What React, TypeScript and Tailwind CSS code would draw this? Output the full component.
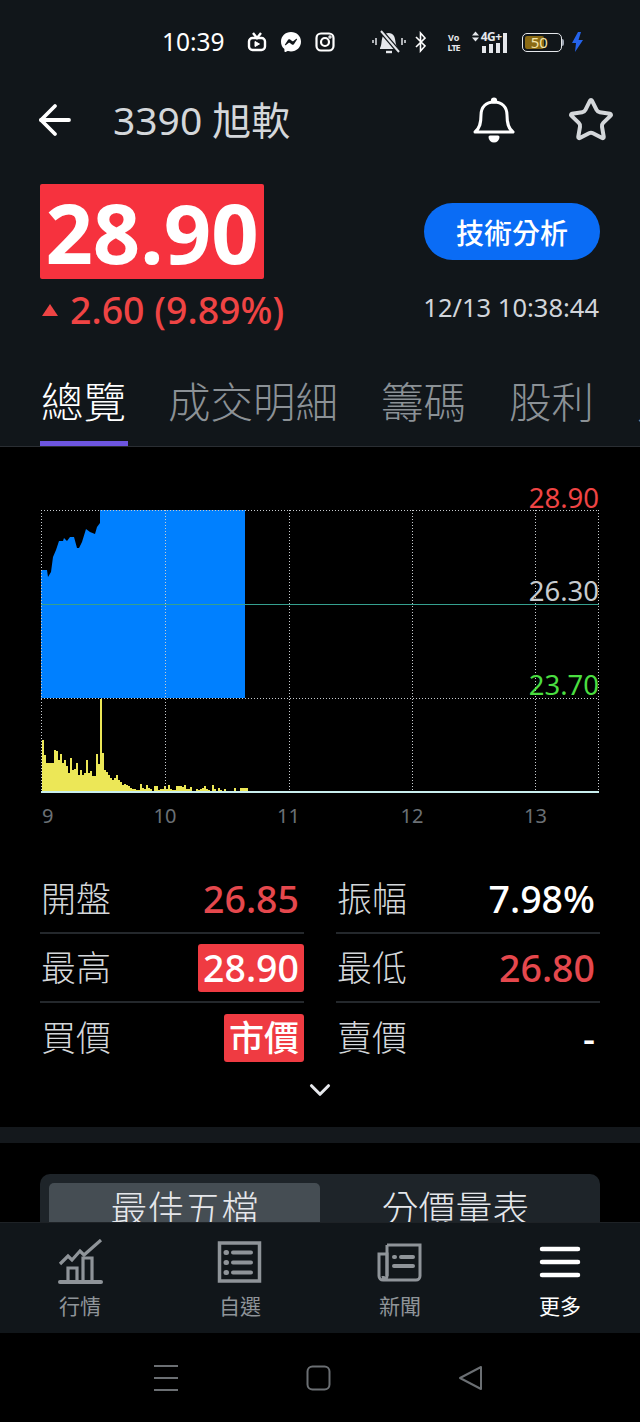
import { ArrowLeft, ChevronDown, Star } from "lucide-react";
import { RiMessengerFill } from "react-icons/ri";

const TABS = ["成交明細", "籌碼", "股利", "財報"];

const VOLUME = [
  52, 37, 29, 29, 29, 29, 42, 41, 32, 38, 29, 32, 26, 19, 34, 22, 23, 29, 17, 22, 17, 19, 32, 19, 21, 16, 16, 38, 28,
  93, 39, 22, 20, 17, 14, 12, 14, 17, 12, 10, 7, 8, 7, 6, 4, 3, 3, 2, 2, 8, 4, 3, 7, 4, 3, 1, 6, 6, 2, 3, 3, 6, 3, 7,
  3, 2, 2, 6, 6, 6, 5, 7, 3, 3, 5, 1, 1, 3, 2, 3, 4, 6, 3, 2, 1, 7, 3, 1, 4, 2, 1, 3, 1, 0, 0, 1, 4, 1, 1, 4, 4, 4, 4,
];

const PRICE_LINE =
  "41,698 41,570 47,570 48,577 51,572 53,557 56,550 59,541 63,541 64,538 67,541 70,537 74,537 77,548 79,548 82,542 86,529 90,532 95,534 97,527 100,523 100,510 245,510 245,698";

function StatusBar() {
  return (
    <div className="flex h-[84px] items-center pl-[162px] text-white">
      <span className="text-[24.5px] leading-none">10:39</span>
      <svg className="ml-[22px] h-[20px] w-[20px]" viewBox="0 0 20 20" fill="none" stroke="white" strokeWidth="2.4">
        <rect x="2" y="6" width="16" height="12" rx="3.5" />
        <path d="M6 1l4 5 4-5" />
        <path d="M8 9.5v5l4.5-2.5z" fill="white" strokeWidth="1" />
      </svg>
      <RiMessengerFill className="ml-[12px] h-[24px] w-[24px]" />
      <svg className="ml-[12px] h-[20px] w-[20px]" viewBox="0 0 20 20" fill="none" stroke="white" strokeWidth="2.2">
        <rect x="1.5" y="1.5" width="17" height="17" rx="4.5" />
        <circle cx="10" cy="10" r="4" />
        <circle cx="15" cy="5" r="0.6" fill="white" />
      </svg>
      <svg className="ml-[37px] h-[26px] w-[34px]" viewBox="0 0 34 26" fill="none">
        <path d="M8 19c2-3 1-8 3-12 2-4 9-4 11 0 2 4 1 9 4 12v1H8z" fill="#e5e7eb" />
        <path d="M14 23h6" stroke="#e5e7eb" strokeWidth="2.4" />
        <path d="M9 2l18 21" stroke="#11161a" strokeWidth="4.5" />
        <path d="M9 2l18 21" stroke="#e5e7eb" strokeWidth="2" />
        <path d="M4 9v7M1 11v3M30 9v7M33 11v3" stroke="#e5e7eb" strokeWidth="1.5" />
      </svg>
      <svg className="ml-[9px] h-[22px] w-[11px]" viewBox="0 0 11 22" fill="none" stroke="white" strokeWidth="1.6">
        <path d="M1 6l9 9-4.5 5V2L10 7l-9 9" />
      </svg>
      <div className="ml-[21px] flex w-[14px] flex-col items-center gap-[1px] text-[9px] font-bold text-[#e5e7eb]">
        <div className="h-[9px] leading-[9px]">Vo</div>
        <div className="h-[9px] leading-[9px] tracking-[-1px]">LTE</div>
      </div>
      <div className="ml-[11px] flex h-[22px] w-[40px] flex-col">
        <div className="flex h-[11px] items-center">
          <svg className="h-[11px] w-[7px]" viewBox="0 0 7 11" fill="#e5e7eb">
            <path d="M0 4.5l3.5-4 3.5 4zM0 6.5h7l-3.5 4z" />
          </svg>
          <span className="ml-[2px] text-[12px] font-bold leading-none tracking-[-0.5px] text-[#e5e7eb]">4G+</span>
        </div>
        <div className="mt-[1px] flex h-[10px] items-end gap-[3px] pl-[10px]">
          <div className="h-[7px] w-[4px] bg-[#e5e7eb]" />
          <div className="h-[9px] w-[4px] bg-[#e5e7eb]" />
          <div className="h-[10px] w-[4px] bg-[#e5e7eb]" />
          <div className="-mt-[10px] h-[20px] w-[4px] bg-[#e5e7eb]" />
        </div>
      </div>
      <div className="relative ml-[10px] flex h-[19px] w-[40px] items-center rounded-[5px] border border-[#e5e7eb] p-[2px]">
        <div className="h-full w-[19px] rounded-[2px] bg-[#8a6a14]" />
        <span className="absolute left-[8px] text-[15px] leading-none text-[#f3e3a8]">50</span>
      </div>
      <div className="h-[7px] w-[2px] rounded-r bg-[#9ca3af]" />
      <svg className="ml-[8px] h-[20px] w-[11px]" viewBox="0 0 11 20" fill="#2563eb">
        <path d="M6 0L0 11h4l-1 9 8-12H6.5L9 0z" />
      </svg>
    </div>
  );
}

function Header() {
  return (
    <div className="flex h-[72px] items-center pl-[31px] pr-[25px]">
      <ArrowLeft className="h-[48px] w-[48px] text-white" strokeWidth={1.9} />
      <span className="mb-[2px] ml-[34px] text-[39px] leading-none text-[#d4d7da]">3390 旭軟</span>
      <svg
        className="ml-auto h-[46px] w-[44px]"
        viewBox="0 0 44 46"
        fill="none"
        stroke="white"
        strokeWidth="3"
        strokeLinejoin="round"
      >
        <path d="M3 35c5-4 6-9 6-17C9 10 14 5 22 5s13 5 13 13c0 8 1 13 6 17z" />
        <circle cx="22" cy="3.5" r="1.6" fill="white" />
        <path d="M18 40h8a4 4 0 0 1-8 0z" fill="white" />
      </svg>
      <Star className="ml-[51px] h-[48px] w-[48px] text-[#d4d7da]" strokeWidth={2} />
    </div>
  );
}

function Quote() {
  return (
    <div className="px-10 pt-[28px]">
      <div className="flex items-center justify-between">
        <div className="flex h-[95px] w-[224px] items-center justify-center rounded-[2px] bg-[#f6323e] text-[83px] font-bold leading-none text-white">
          28.90
        </div>
        <div className="flex h-[57px] w-[176px] items-center justify-center rounded-full bg-[#0a6cf5] pt-[3px] text-[28px] font-medium text-white">
          技術分析
        </div>
      </div>
      <div className="mt-[11px] flex h-[40px] items-center justify-between">
        <div className="flex items-center text-[37.5px] font-medium leading-none text-[#ef4444]">
          <span className="ml-[2px] mr-[12px] h-0 w-0 border-x-[8px] border-b-[12px] border-x-transparent border-b-[#ef4444]" />
          2.60 (9.89%)
        </div>
        <span className="pb-[5px] pr-[1px] text-[25.5px] leading-none text-[#d1d5db]">12/13 10:38:44</span>
      </div>
    </div>
  );
}

function TabBar() {
  return (
    <div className="mt-[37px] flex h-[80px] items-start overflow-hidden whitespace-nowrap border-b border-[#2a2e33] pl-10 text-[42.5px] font-light leading-[70px]">
      <div className="-mr-[3px] h-[80px] w-[88px] shrink-0 border-b-[6px] border-[#6d55e0] pl-[1px] text-white">總覽</div>
      {TABS.map((tab) => (
        <span key={tab} className="ml-[43px] shrink-0 text-[#8b9196]">
          {tab}
        </span>
      ))}
    </div>
  );
}

function Chart() {
  return (
    <div className="relative mt-[53px] h-[300px]">
      <svg className="h-[300px] w-[640px]" viewBox="0 500 640 300">
        <polygon points={PRICE_LINE} fill="#0080ff" />
        {VOLUME.map((h, i) => (
          <rect key={i} x={42 + i * 2} y={792 - h} width="2" height={h} fill="#ece757" />
        ))}
        <g stroke="#c8ccd0" strokeDasharray="1 2" fill="none">
          <path d="M41 510.5H598M41 698.5H598" />
          <path d="M41.5 510V792M165.5 510V792M289.5 510V792M412.5 510V792M535.5 510V792M598.5 510V792" />
        </g>
        <path d="M41 604.5H599" stroke="#35a08f" />
        <path d="M41 792H599" stroke="#c9eeee" strokeWidth="2" />
      </svg>
      <div className="absolute right-[41px] top-[-20px] text-[27.5px] leading-[36px] text-[#ef4444]">28.90</div>
      <div className="absolute right-[41px] top-[73px] text-[27.5px] leading-[36px] text-[#c8cbce]">26.30</div>
      <div className="absolute right-[41px] top-[167px] text-[27.5px] leading-[36px] text-[#4ade40]">23.70</div>
    </div>
  );
}

function TimeAxis() {
  return (
    <div className="mt-[2px] flex pl-[42px] text-[20px] leading-[28px] text-[#6b7075]">
      <span className="w-[61px]">9</span>
      <span className="w-[124px] text-center">10</span>
      <span className="w-[123px] text-center">11</span>
      <span className="w-[124px] text-center">12</span>
      <span className="w-[123px] text-center">13</span>
    </div>
  );
}

function StatRow({
  label,
  value,
  tone,
  divider,
}: {
  label: string;
  value: string;
  tone: "red" | "white" | "badge" | "market";
  divider?: boolean;
}) {
  return (
    <div className={`flex h-[69px] items-center justify-between ${divider ? "border-b-2 border-[#24282c]" : ""}`}>
      <span className="pl-[1px] text-[35px] font-light leading-none text-[#d4d7da]">{label}</span>
      {tone === "badge" || tone === "market" ? (
        <span
          className={`flex h-[48px] items-center rounded-[3px] bg-[#ef3b42] px-[5px] font-medium leading-none text-white ${tone === "market" ? "text-[35px]" : "text-[37.5px]"}`}
        >
          {value}
        </span>
      ) : (
        <span
          className={`pr-[5px] text-[37.5px] font-medium leading-none ${tone === "red" ? "text-[#e5484d]" : "text-white"}`}
        >
          {value}
        </span>
      )}
    </div>
  );
}

function Stats() {
  return (
    <div className="mt-[35px]">
      <div className="grid grid-cols-2 gap-x-[32px] px-10">
        <div>
          <StatRow label="開盤" value="26.85" tone="red" divider />
          <StatRow label="最高" value="28.90" tone="badge" divider />
          <StatRow label="買價" value="市價" tone="market" />
        </div>
        <div>
          <StatRow label="振幅" value="7.98%" tone="white" divider />
          <StatRow label="最低" value="26.80" tone="red" divider />
          <StatRow label="賣價" value="-" tone="white" />
        </div>
      </div>
      <div className="flex h-[34px] items-center justify-center pt-[2px]">
        <ChevronDown className="h-[34px] w-[34px] text-[#e5e7eb]" strokeWidth={2.2} />
      </div>
    </div>
  );
}

function DepthTabs() {
  return (
    <div className="mx-10 mt-[31px] h-[70px] rounded-t-[10px] bg-[#1e2429] px-[9px] pt-[9px]">
      <div className="grid h-[60px] grid-cols-2 text-center text-[37px] font-light leading-[52px] text-[#e5e7eb]">
        <div className="rounded-t-[5px] bg-[#454d53]">最佳五檔</div>
        <div>分價量表</div>
      </div>
    </div>
  );
}

function NavItem({ label, active, children }: { label: string; active?: boolean; children: React.ReactNode }) {
  return (
    <div className={`flex flex-col items-center pt-[16px] ${active ? "text-white" : "text-[#8f9499]"}`}>
      <div className="h-[50px] w-[48px]">{children}</div>
      <span className="mt-[2px] text-[21px] leading-[30px]">{label}</span>
    </div>
  );
}

function BottomNav() {
  return (
    <div className="grid h-[111px] shrink-0 grid-cols-4 border-t border-[#1e2226] bg-[#11161a]">
      <NavItem label="行情">
        <svg viewBox="0 0 48 50" fill="none" stroke="currentColor" strokeWidth="3.2">
          <path d="M4 25l8-8 4 4 8-9 4 4L45 1" />
          <path d="M4 43h41" strokeWidth="4" strokeLinecap="round" />
          <path d="M12 42V29h9v13M27 42V19h9v23" />
        </svg>
      </NavItem>
      <NavItem label="自選">
        <svg viewBox="0 0 48 50" fill="none" stroke="currentColor">
          <rect x="3.5" y="4" width="40" height="38" strokeWidth="3.5" />
          <path d="M17 13.5h18M17 23.5h18M17 33.5h18" strokeWidth="4" strokeLinecap="round" />
          <path d="M10 13.5h.5M10 23.5h.5M10 33.5h.5" strokeWidth="5" strokeLinecap="round" />
        </svg>
      </NavItem>
      <NavItem label="新聞">
        <svg viewBox="0 0 48 50" fill="none" stroke="currentColor" strokeWidth="3">
          <path d="M11 6h33v31a4 4 0 0 1-4 4H7a4 4 0 0 1-4-4V15h8v22a2 2 0 0 1-4 0" />
          <path d="M11 6v31" />
          <path d="M25 18h12M18 27h19" strokeWidth="4" strokeLinecap="round" />
          <path d="M18 18h1" strokeWidth="4" strokeLinecap="round" />
        </svg>
      </NavItem>
      <NavItem label="更多" active>
        <svg viewBox="0 0 48 50" fill="none" stroke="currentColor" strokeWidth="4.5" strokeLinecap="round">
          <path d="M6 10h36M6 23h36M6 36h36" />
        </svg>
      </NavItem>
    </div>
  );
}

function SystemNav() {
  return (
    <div className="flex h-[89px] shrink-0 items-center bg-black pl-[153px] text-[#6b6f73]">
      <svg className="h-[28px] w-[26px]" viewBox="0 0 26 28" stroke="currentColor" strokeWidth="2">
        <path d="M1 2h24M1 14h24M1 26h24" />
      </svg>
      <svg className="ml-[127px] h-[26px] w-[25px]" viewBox="0 0 25 26" fill="none" stroke="currentColor" strokeWidth="2">
        <rect x="1.5" y="1.5" width="22" height="23" rx="5" />
      </svg>
      <svg className="ml-[127px] h-[26px] w-[25px]" viewBox="0 0 25 26" fill="none" stroke="currentColor" strokeWidth="2">
        <path d="M23 2v22L2 13z" strokeLinejoin="round" />
      </svg>
    </div>
  );
}

export default function App() {
  return (
    <div className="flex h-[1422px] w-[640px] flex-col overflow-hidden bg-black font-['Noto_Sans','Noto_Sans_CJK_TC',sans-serif]">
      <div className="shrink-0 bg-[#11161a]">
        <StatusBar />
        <Header />
        <Quote />
        <TabBar />
      </div>
      <main className="min-h-0 flex-1 overflow-hidden">
        <Chart />
        <TimeAxis />
        <Stats />
        <div className="mt-[21px] h-[16px] bg-[#14181c]" />
        <DepthTabs />
      </main>
      <BottomNav />
      <SystemNav />
    </div>
  );
}
